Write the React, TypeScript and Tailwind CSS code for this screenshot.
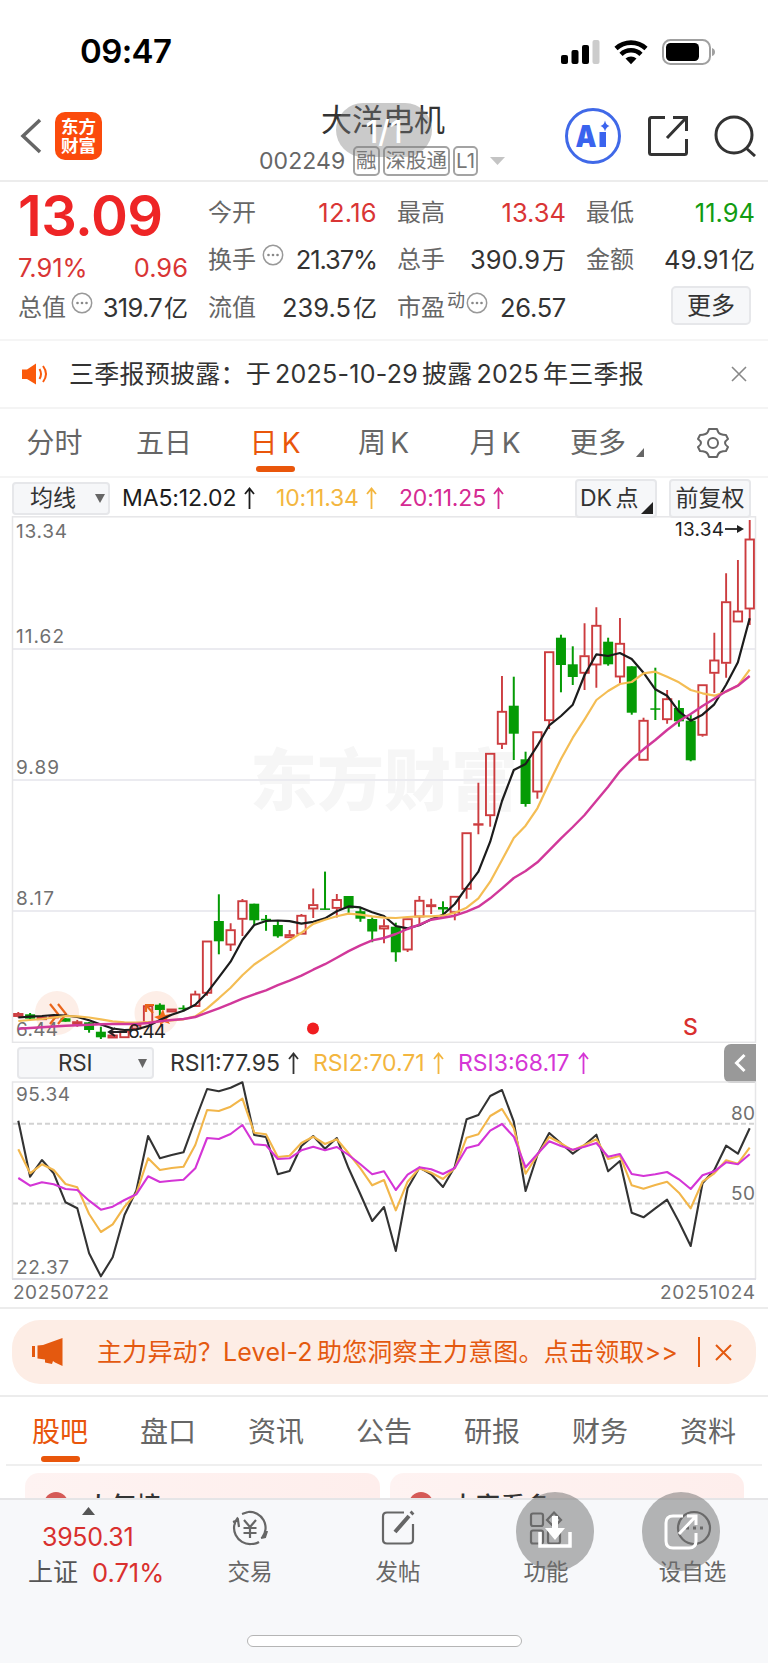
import React from "react";

type Candle = [color: "r" | "g", high: number, top: number, bottom: number, low: number];

// One entry per trading day: high, body top, body bottom, low
const candles: Candle[] = [
  ["r", 1012, 1013.5, 1016.5, 1017.5], ["g", 1013, 1014.3, 1018.7, 1019.7], ["r", 1017, 1017, 1019.7, 1019.7],
  ["r", 1015, 1015.5, 1018, 1018], ["g", 1018, 1018.3, 1021.7, 1021.7], ["r", 1020, 1021.7, 1024.3, 1026.7],
  ["g", 1022, 1022.3, 1030, 1032.7], ["g", 1026.7, 1031.7, 1037.3, 1039], ["r", 1030.7, 1035, 1038, 1038],
  ["r", 1031, 1031, 1037.7, 1037.7], ["r", 1025, 1025, 1029, 1029], ["r", 1004.5, 1005.7, 1023, 1023],
  ["g", 1003.3, 1004.7, 1010, 1016.7], ["r", 1009, 1009, 1012, 1012], ["g", 1005.3, 1007.7, 1009.3, 1011.3],
  ["r", 990.7, 994, 1006.5, 1006.5], ["r", 941, 941, 993.3, 995.7], ["g", 894.3, 921, 941.3, 954.3],
  ["r", 923.3, 929.7, 945, 951], ["r", 899, 900.7, 919.3, 936], ["g", 903.7, 903.7, 920.3, 925.3],
  ["g", 915, 918.8, 920.5, 930.8], ["g", 920.5, 925, 936.3, 937.7], ["r", 930, 934.6, 937.7, 937.7],
  ["r", 914, 915.3, 934.2, 934.2], ["r", 888.4, 904.6, 909, 918], ["g", 871.6, 908.4, 909.5, 909.5],
  ["r", 894, 899.5, 908.4, 917.4], ["g", 896, 896, 908.4, 912.9], ["g", 907.7, 911.2, 918.7, 921.8],
  ["g", 917.4, 919, 931.5, 942.2], ["r", 919.3, 925.7, 929, 943.3], ["g", 922.7, 926.7, 952.3, 961.7],
  ["r", 918.7, 918.7, 950, 952], ["r", 896, 900.3, 917, 925.7], ["r", 898.7, 904.7, 906.7, 914],
  ["g", 901.3, 907, 909.5, 914], ["r", 896.3, 896.3, 912.7, 920.3], ["r", 832.7, 832.7, 889.3, 898.7],
  ["r", 782.7, 823.7, 824.7, 834.3], ["r", 753.3, 753.3, 815.7, 826.7], ["r", 676, 711.3, 744.3, 749],
  ["g", 676.7, 705.7, 733.7, 760], ["g", 751.7, 759.3, 804, 806.7], ["r", 731.7, 731.7, 792, 798.7],
  ["r", 651.7, 651.7, 720.7, 729], ["g", 634.7, 637.7, 665, 692.3], ["g", 646.3, 664.3, 677, 685],
  ["r", 623.3, 655.7, 673.3, 690], ["r", 607.3, 625.3, 665, 687.7], ["g", 637.7, 641.7, 664.3, 665.7],
  ["r", 618, 643.3, 677, 683.3], ["g", 666.3, 666.3, 712.7, 714.7], ["r", 717.7, 720.3, 760.3, 760.3],
  ["g", 667.7, 708.3, 709.3, 720], ["r", 690, 698.7, 719.7, 723.7], ["g", 700.3, 708, 721.3, 726.7],
  ["g", 715, 720.7, 760.3, 761.3], ["r", 684.7, 684.7, 735.3, 736.7], ["r", 632.7, 660, 673.3, 693],
  ["r", 573.3, 601.7, 663.3, 677.7], ["r", 560, 611, 622, 622], ["r", 520, 539, 609, 625],
];

const ma5 = [
  1017.5, 1016.7, 1016, 1015, 1015.5, 1017, 1020.3, 1024.5, 1028.5, 1030, 1029.5, 1026, 1020, 1014.7, 1010.7, 1004.7,
  992.7, 977.3, 961.7, 940, 925, 921, 920.5, 921.2, 923.6, 921.8, 918.4, 911.2, 906.4, 907.4, 912.2, 916, 926, 928.3,
  925.3, 919.3, 914.7, 904, 887.3, 871.7, 841.7, 801, 770, 764, 745.7, 725.3, 716, 704.7, 675, 654.3, 656, 653, 659,
  672.7, 689.3, 695.7, 711.3, 720.7, 714.7, 704.3, 684.7, 662.3, 618.3,
];
const ma10 = [
  1021, 1020, 1019, 1017.5, 1016, 1016.3, 1017.5, 1019.3, 1021.3, 1022.3, 1022.7, 1022, 1021.5, 1020.5, 1019.3, 1016.3,
  1008.3, 998.3, 987.7, 975.3, 964.5, 956.6, 948.7, 940.4, 932.9, 923.9, 919.8, 916.3, 913.6, 914.6, 916.3, 917.7, 918,
  917, 916.3, 916.3, 915.7, 912.7, 907.7, 898.3, 881.7, 860, 838, 825.7, 808.3, 783, 759, 737.7, 719.3, 700, 691, 684,
  682, 673.3, 671.7, 676.7, 682.3, 690, 693.3, 695.7, 691.7, 685.7, 669.7,
];
const ma20 = [
  1028.7, 1028, 1027.3, 1026.5, 1025.7, 1025.2, 1024.7, 1024.3, 1024, 1024, 1024, 1023, 1021.3, 1020, 1019, 1017, 1012.7,
  1008.3, 1003.7, 998.7, 994.3, 990.4, 985.2, 980.7, 975.6, 969.7, 964.2, 957.7, 951.1, 945.3, 940.4, 938, 934, 929,
  924.7, 919.7, 917.7, 915.7, 911.7, 906.7, 898.3, 888.3, 878, 871, 862.3, 850.3, 838.3, 827, 815, 800.7, 786.7, 771.3,
  759.3, 749.3, 740, 730, 721, 714, 706, 698.7, 691.3, 685.7, 676,
];

// RSI series are stored at three units per pixel
const rsi1 = [
  242, 410, 360, 400, 487, 505, 640, 709, 652, 525, 452, 288, 355, 345, 337, 240, 147, 154, 143, 127, 285, 291, 403, 393,
  318, 288, 326, 294, 385, 463, 543, 501, 633, 445, 383, 403, 441, 380, 238, 225, 168, 150, 245, 453, 345, 279, 310, 341,
  315, 284, 394, 363, 518, 532, 505, 479, 545, 618, 430, 390, 317, 341, 265,
];
const rsi2 = [
  328, 400, 373, 390, 432, 442, 522, 576, 553, 500, 460, 355, 390, 384, 380, 315, 210, 213, 200, 176, 278, 283, 351, 347,
  309, 290, 312, 298, 340, 385, 436, 420, 511, 425, 385, 398, 417, 385, 293, 283, 228, 207, 265, 401, 345, 291, 310, 331,
  315, 298, 357, 347, 436, 446, 435, 425, 458, 505, 425, 400, 361, 371, 323,
];
const rsi3 = [
  414, 437, 427, 433, 447, 450, 482, 509, 500, 480, 463, 409, 426, 422, 419, 385, 294, 297, 282, 255, 313, 316, 357, 355,
  331, 320, 331, 321, 345, 373, 403, 394, 450, 404, 382, 388, 402, 384, 324, 315, 272, 252, 290, 382, 342, 304, 318, 329,
  320, 309, 350, 342, 402, 408, 403, 396, 418, 447, 406, 394, 367, 373, 343,
];

const dayX = (i: number) => 18.3 + i * 11.797;
const toPoints = (ys: number[]) => ys.map((y, i) => `${dayX(i).toFixed(1)},${y}`).join(" ");
const rsiPoints = (ys: number[]) => toPoints(ys.map((v) => +(1040 + v / 3).toFixed(1)));

const StatusBar = () => (
  <div className="flex h-[95px] shrink-0 items-center justify-between pl-[80px] pr-[52px] pt-[8px]">
    <span className="text-[33px] font-semibold leading-none tracking-[-0.6px] text-black">09:47</span>
    <svg width="156" height="28" viewBox="0 0 156 28">
      <rect x="1" y="17" width="7" height="9" rx="2" />
      <rect x="11.5" y="12" width="7" height="14" rx="2" />
      <rect x="22" y="7" width="7" height="19" rx="2" />
      <rect x="32.500" y="2" width="7" height="24" rx="2" fill="#cccccc" />
      <g fill="none" stroke="#000" strokeWidth="4.600">
        <path d="M56 10.500a22 22 0 0 1 30 0" />
        <path d="M61 16.300a14.500 14.500 0 0 1 20 0" />
      </g>
      <path d="M65.500 20.500a8.500 8.500 0 0 1 11 0L71 26.300z" />
      <rect x="103" y="2" width="47" height="24" rx="7.500" fill="none" stroke="#a0a0a0" strokeWidth="2" />
      <rect x="106" y="5" width="33" height="18" rx="4.500" />
      <path d="M152 10q3 1 3 4t-3 4z" fill="#a0a0a0" />
    </svg>
  </div>
);

const Tag = ({ children }: { children: React.ReactNode }) => (
  <span className="flex h-[30px] items-center whitespace-nowrap rounded-[5px] border-2 border-[#a3a3a3] px-[1px] text-[20.5px] leading-none text-[#777]">
    {children}
  </span>
);

const Header = () => (
  <div className="relative flex h-[87px] shrink-0 items-center justify-between border-b-2 border-[#ececec] pb-[3px] pl-[20px] pr-[12px]">
    <div className="flex items-center gap-[13px]">
      <svg width="22" height="36" viewBox="0 0 22 36" fill="none" stroke="#666" strokeWidth="3.500">
        <path d="M20 2 3 18l17 16" />
      </svg>
      <div className="flex h-[48px] w-[47px] flex-col items-center justify-center rounded-[10px] bg-[#fb4b0c] text-[17.5px] font-bold leading-[19px] text-white">
        <span>东方</span>
        <span>财富</span>
      </div>
    </div>
    <div className="flex items-center gap-[25px]">
      <svg width="57" height="56" viewBox="0 0 57 56">
        <circle cx="28" cy="28" r="26.500" fill="none" stroke="#4069e8" strokeWidth="3" />
        <text x="10.500" y="39" fontSize="30" fontWeight="900" fill="#3a63ee" textLength="21" lengthAdjust="spacingAndGlyphs">A</text>
        <path d="M34.500 24h6.500v15h-6.500z" fill="#3a63ee" />
        <path d="M40 12.500q1 4.500 4.500 5.500-3.500 1-4.500 5.500-1-4.500-4.500-5.500 3.500-1 4.500-5.500z" fill="#3a63ee" />
      </svg>
      <svg width="42" height="42" viewBox="0 0 42 42" fill="none" stroke="#333" strokeWidth="3">
        <path d="M18 2.500H4.500Q2.500 2.500 2.500 4.500v33q0 2 2 2h33q2 0 2-2V24M26 2.500h13.500V16M39 3 20 23" />
      </svg>
      <svg width="42" height="42" viewBox="0 0 42 42" fill="none" stroke="#333" strokeWidth="3">
        <circle cx="20" cy="20" r="18" />
        <path d="m32 33 9 8" />
      </svg>
    </div>
    <div className="absolute left-[259px] top-[9px] flex w-[280px] flex-col">
      <span className="pl-[62px] text-[31px] leading-[32px] text-[#333]">大洋电机</span>
      <div className="mt-[10px] flex items-center">
        <span className="w-[94px] text-[23px] leading-none tracking-[0.1px] text-[#666]">002249</span>
        <div className="flex gap-[3px]">
          <Tag>融</Tag>
          <Tag>深股通</Tag>
          <Tag>L1</Tag>
        </div>
        <svg className="ml-[12px]" width="15" height="8" viewBox="0 0 15 8">
          <path d="M0 0h15L7.500 8z" fill="#c4c4c4" />
        </svg>
      </div>
    </div>
    <div className="absolute left-[336px] top-[8px] flex h-[54px] w-[96px] items-center justify-center rounded-full bg-[#7a7a7a]/40 pt-[3px] text-[31px] font-medium leading-none text-white">
      1/1
    </div>
  </div>
);

const Dots = () => (
  <svg className="-mt-[10px]" width="22" height="22" viewBox="0 0 22 22">
    <circle cx="11" cy="11" r="9.700" fill="none" stroke="#999" strokeWidth="1.500" />
    <g fill="#888">
      <circle cx="6.500" cy="11" r="1.300" />
      <circle cx="11" cy="11" r="1.300" />
      <circle cx="15.500" cy="11" r="1.300" />
    </g>
  </svg>
);

const Label = ({ children }: { children: React.ReactNode }) => (
  <span className="text-[24px] leading-none text-[#666]">{children}</span>
);

// Number with an optional 万 / 亿 unit after it
const Amount = ({ value, unit, className = "" }: { value: string; unit?: string; className?: string }) => (
  <span className={`whitespace-nowrap text-[25.5px] leading-none ${className}`}>
    {value}
    {unit && <span className="ml-[2px] text-[24px] tracking-normal">{unit}</span>}
  </span>
);

const Quote = () => (
  <div className="grid h-[159px] shrink-0 grid-cols-4 gap-x-[20px] border-b-2 border-[#f5f5f5] pl-[19px] pr-[13px] pt-[1px] text-[24px] leading-none text-[#333]">
    <div>
      <div className="-ml-px flex h-[66px] items-center text-[56px] font-semibold tracking-[-0.5px] text-[#ee2526]">13.09</div>
      <div className="-ml-px flex h-[37px] items-center justify-between text-[#d93535]">
        <Amount value="7.91%" />
        <Amount value="0.96" />
      </div>
      <div className="-ml-px flex h-[43px] items-center justify-between">
        <span className="flex items-center gap-[5px]"><Label>总值</Label><Dots /></span>
        <Amount value="319.7" unit="亿" className="tracking-[-0.7px]" />
      </div>
    </div>
    <div>
      <div className="flex h-[60px] items-center justify-between"><Label>今开</Label><Amount value="12.16" className="tracking-[0.3px] text-[#d93535]" /></div>
      <div className="flex h-[34px] items-center justify-between">
        <span className="flex items-center gap-[6px]"><Label>换手</Label><Dots /></span>
        <Amount value="21.37%" className="tracking-[-1.1px]" />
      </div>
      <div className="flex h-[61px] items-center justify-between"><Label>流值</Label><Amount value="239.5" unit="亿" /></div>
    </div>
    <div>
      <div className="flex h-[60px] items-center justify-between"><Label>最高</Label><Amount value="13.34" className="text-[#d93535]" /></div>
      <div className="flex h-[34px] items-center justify-between"><Label>总手</Label><Amount value="390.9" unit="万" /></div>
      <div className="flex h-[61px] items-center justify-between">
        <span className="flex items-center"><Label>市盈</Label><span className="-mt-[14px] mr-[1px] pl-[2px] text-[18px] text-[#666]">动</span><Dots /></span>
        <Amount value="26.57" className="tracking-[-0.3px]" />
      </div>
    </div>
    <div>
      <div className="flex h-[60px] items-center justify-between"><Label>最低</Label><Amount value="11.94" className="text-[#129c12]" /></div>
      <div className="flex h-[34px] items-center justify-between"><Label>金额</Label><Amount value="49.91" unit="亿" /></div>
      <div className="flex h-[57px] items-center justify-end pr-[4px]">
        <span className="flex h-[39px] w-[80px] items-center justify-center rounded-[5px] border-2 border-[#e6e7ea] bg-[#f6f7f9]">更多</span>
      </div>
    </div>
  </div>
);

const Notice = () => (
  <div className="flex h-[68px] shrink-0 items-center border-b-2 border-[#f4f4f4] pl-[22px] pr-[21px]">
    <svg width="26" height="24" viewBox="0 0 26 24">
      <path d="M0 7.500h5L14 1.500v21L5 17H0z" fill="#fa5a0c" />
      <path d="M17.500 7q3 5 0 10M21 4q6 8 0 16" fill="none" stroke="#fa5a0c" strokeWidth="2" />
    </svg>
    <span className="ml-[21px] flex-1 whitespace-nowrap text-[25px] leading-none tracking-[0.25px] text-[#333] [word-spacing:-3.2px]">三季报预披露：于 2025-10-29 披露 2025 年三季报</span>
    <svg width="16" height="16" viewBox="0 0 16 16" stroke="#888" strokeWidth="1.600">
      <path d="m1 1 14 14M15 1 1 15" />
    </svg>
  </div>
);

const periodTabs = [
  { name: "分时", width: "w-[109px]" },
  { name: "五日", width: "w-[110px]" },
  { name: "日 K", width: "w-[112px]", active: true },
  { name: "周 K", width: "w-[105px]" },
  { name: "月 K", width: "w-[118px]" },
];

const PeriodTabs = () => (
  <div className="flex h-[69px] shrink-0 items-stretch border-b-2 border-[#f4f4f4] text-[28px] leading-none text-[#666]">
    {periodTabs.map((t) => (
      <div key={t.name} className={`relative flex items-center justify-center [word-spacing:-3.5px] ${t.width} ${t.active ? "text-[#e9560b]" : ""}`}>
        {t.name}
        {t.active && <span className="absolute bottom-[4px] h-[6px] w-[39px] rounded-full bg-[#e9560b]" />}
      </div>
    ))}
    <div className="flex items-center pl-[16px]">
      更多
      <svg className="ml-[10px] mt-[19px]" width="8" height="9" viewBox="0 0 8 9"><path d="M8 0v9H0z" fill="#666" /></svg>
    </div>
    <div className="flex flex-1 items-center justify-end pr-[39px]">
      <svg width="32" height="32" viewBox="0 0 32 32" fill="none" stroke="#666" strokeWidth="2" strokeLinejoin="round">
        <path d="M12 2h8q1 4 3.500 5t5.500 1l2 4q-3 2-3 4t3 4l-2 4q-3 0-5.500 1T20 30h-8q-1-4-3.500-5T3 24l-2-4q3-2 3-4t-3-4l2-4q3 0 5.500-1T12 2z" />
        <circle cx="16" cy="16" r="5" />
      </svg>
    </div>
  </div>
);

const UpArrow = () => (
  <svg width="11" height="23" viewBox="0 0 11 23" fill="none" stroke="currentColor" strokeWidth="1.800">
    <path d="M5.500 22V2M1 7l4.500-5.500L10 7" />
  </svg>
);

const Indicator = ({ text, className }: { text: string; className: string }) => (
  <span className={`flex items-center whitespace-nowrap leading-none ${className}`}>
    {text}
    <UpArrow />
  </span>
);

const MaRow = () => (
  <div className="flex h-[38px] shrink-0 items-center pl-[12px] pt-[2px] text-[23px] leading-none">
    <span className="flex h-[33px] w-[98px] items-center rounded-[4px] border-2 border-[#e6e7ea] bg-[#f6f7f9] pl-[16px] text-[#333]">
      均线
      <svg className="ml-[19px]" width="10" height="9" viewBox="0 0 10 9"><path d="M0 0h10L5 9z" fill="#666" /></svg>
    </span>
    <Indicator text="MA5:12.02" className="ml-[12px] w-[154px] gap-[8px] tracking-[-0.1px] text-[#1c1c1c]" />
    <Indicator text="10:11.34" className="w-[123px] gap-[7px] tracking-[-0.2px] text-[#f3b63f]" />
    <Indicator text="20:11.25" className="gap-[7px] tracking-[-0.2px] text-[#d52a92]" />
    <span className="ml-auto flex h-[39px] w-[82px] items-center whitespace-nowrap rounded-[4px] border-2 border-[#e6e7ea] bg-[#f6f7f9] pl-[3px] text-[#333] [word-spacing:-3px]">
      DK 点
      <svg className="ml-[2px] mt-[20px] shrink-0" width="12" height="12" viewBox="0 0 12 12"><path d="M12 0v12H0z" fill="#222" /></svg>
    </span>
    <span className="ml-[12px] mr-[17px] flex h-[39px] w-[82px] items-center justify-center rounded-[4px] border-2 border-[#e6e7ea] bg-[#f6f7f9] text-[#333]">前复权</span>
  </div>
);

const CandleChart = () => (
  <svg className="shrink-0" width="768" height="527" viewBox="0 516 768 527" fill="none">
    <text x="250" y="805" fontSize="67" fontWeight="900" fill="#f6f6f6" textLength="268">东方财富</text>
    <g stroke="#ebebf0" strokeWidth="2">
      <path d="M13 649H755M13 780H755M13 911H755" />
      <rect x="12.500" y="516.800" width="743" height="525.500" stroke="#e6e6e8" strokeWidth="1.500" />
    </g>
    <circle cx="57" cy="1013" r="22" fill="#fdeee7" />
    <circle cx="156.500" cy="1013" r="22" fill="#fdeee7" />
    <g fontSize="19" fill="#707070">
      <text x="16" y="538" textLength="51">13.34</text>
      <text x="16" y="642.500" textLength="48">11.62</text>
      <text x="16" y="773.500" textLength="43">9.89</text>
      <text x="16" y="905" textLength="38">8.17</text>
      <text x="16" y="1036" textLength="42">6.44</text>
    </g>
    {candles.map(([color, high, top, bottom, low], i) => {
      const x = dayX(i);
      return color === "g" ? (
        <g key={i} fill="#059b05">
          <rect x={x - 1} y={high} width="2" height={low - high} />
          <rect x={x - 5} y={top} width="10" height={Math.max(bottom - top, 1.5)} />
        </g>
      ) : (
        <g key={i} stroke="#cc3c3f" strokeWidth="1.900">
          <path d={`M${x} ${high}V${top}M${x} ${bottom}V${low}`} />
          <rect x={x - 4.2} y={top + 0.5} width="8.400" height={Math.max(bottom - top - 1, 0.5)} />
        </g>
      );
    })}
    <g stroke="#e9651b" strokeWidth="2.200">
      <path d="m50 1004 8 10-8 10M58 1004l8 10-8 10" />
      <path d="M146 1012v-7h8M146 1005l7 8" />
    </g>
    <path d="m163 1009 2 6 6-1-4 5 3 5-6-2-4 4v-6l-6-3 6-2z" fill="#f26a1b" />
    <g strokeWidth="2.200" strokeLinejoin="round">
      <polyline points={toPoints(ma5)} stroke="#1c1c1c" />
      <polyline points={toPoints(ma10)} stroke="#f4bd54" />
      <polyline points={toPoints(ma20)} stroke="#d1389a" strokeWidth="2.400" />
    </g>
    <text x="128" y="1038" fontSize="19" fill="#222" textLength="38">6.44</text>
    <path d="M109 1032h18M115 1028l-6 4 6 4" stroke="#222" strokeWidth="2" />
    <text x="675" y="536" fontSize="19" fill="#222" textLength="49">13.34</text>
    <path d="M725 529h17" stroke="#222" strokeWidth="1.800" />
    <path d="m737 525 7 4-7 4z" fill="#222" />
    <circle cx="313" cy="1028.500" r="6" fill="#f01d20" />
    <text x="683" y="1034.500" fontSize="23" fontWeight="500" fill="#d9302e">S</text>
  </svg>
);

const RsiRow = () => (
  <div className="flex h-[38px] shrink-0 items-center pl-[17px] pt-[2px] text-[23px] leading-none">
    <span className="flex h-[32px] w-[137px] items-center rounded-[4px] border-2 border-[#e6e7ea] bg-[#f6f7f9] pl-[39px] text-[22.5px] tracking-[-0.2px] text-[#333]">
      RSI
      <svg className="ml-[46px]" width="9" height="9" viewBox="0 0 9 9"><path d="M0 0h9L4.500 9z" fill="#666" /></svg>
    </span>
    <Indicator text="RSI1:77.95" className="ml-[16px] w-[143px] gap-[8px] text-[#333]" />
    <Indicator text="RSI2:70.71" className="w-[145px] gap-[8px] text-[#f3b63f]" />
    <Indicator text="RSI3:68.17" className="gap-[8px] text-[#d536d5]" />
    <span className="ml-auto mr-[12px] flex h-[39px] w-[32px] items-center justify-center rounded-l-[7px] bg-[#999]">
      <svg width="12" height="20" viewBox="0 0 12 20" fill="none" stroke="#fff" strokeWidth="3"><path d="m10.500 2-8 8 8 8" /></svg>
    </span>
  </div>
);

const RsiChart = () => (
  <svg className="shrink-0" width="768" height="226" viewBox="0 1081 768 226" fill="none">
    <path d="M12.500 1279V1082H755.500V1279" stroke="#e6e6e8" strokeWidth="1.500" />
    <path d="M12 1279H756" stroke="#dfdfe6" strokeWidth="2" />
    <path d="M13 1123.700H755M13 1203.500H755" stroke="#d2d2d2" strokeWidth="2" strokeDasharray="5 3" />
    <g fontSize="19" fill="#707070">
      <text x="16" y="1101" textLength="54">95.34</text>
      <text x="16" y="1273.500" textLength="53">22.37</text>
      <text x="731" y="1119.500" textLength="24">80</text>
      <text x="731" y="1199.500" textLength="24">50</text>
      <text x="13" y="1298.500" textLength="96">20250722</text>
      <text x="660" y="1298.500" textLength="95">20251024</text>
    </g>
    <g strokeWidth="2.100" strokeLinejoin="round">
      <polyline points={rsiPoints(rsi1)} stroke="#333" />
      <polyline points={rsiPoints(rsi2)} stroke="#f2b64a" />
      <polyline points={rsiPoints(rsi3)} stroke="#d435d6" />
    </g>
  </svg>
);

const Banner = () => (
  <div className="shrink-0 border-y-2 border-[#ececec] px-[12px] py-[11px]">
    <div className="flex h-[64px] items-center rounded-[28px] bg-[#fdede5] pl-[20px] pr-[24px] text-[#e4590f]">
      <svg width="31" height="28" viewBox="0 0 31 28" fill="currentColor">
        <path d="M0 8h3v11H0zM5.500 7.500 11 7 30.500 0v28L23 24.500l-2-1.500-1 3-7-1.500v-3l-7.500-1z" />
      </svg>
      <span className="ml-[34px] flex-1 whitespace-nowrap text-[25px] leading-none tracking-[0.2px] [word-spacing:-3px]">主力异动？Level-2 助您洞察主力意图。点击领取&gt;&gt;</span>
      <span className="h-[30px] w-[2px] bg-current" />
      <svg className="ml-[15px]" width="17" height="17" viewBox="0 0 17 17" stroke="currentColor" strokeWidth="2"><path d="m1 1 15 15M16 1 1 16" /></svg>
    </div>
  </div>
);

const infoTabs = ["股吧", "盘口", "资讯", "公告", "研报", "财务", "资料"];

const InfoTabs = () => (
  <div className="mx-[6px] flex h-[69px] shrink-0 justify-between border-b-2 border-[#efefef] px-[26px] text-[28px] leading-none text-[#666]">
    {infoTabs.map((name, i) => (
      <div key={name} className={`relative flex h-[69px] items-center justify-center ${i === 0 ? "text-[#e9560b]" : ""}`}>
        {name}
        {i === 0 && <span className="absolute bottom-[4px] h-[6px] w-[39px] rounded-full bg-[#e9560b]" />}
      </div>
    ))}
  </div>
);

const Cards = () => (
  <div className="flex h-[32px] shrink-0 gap-[10px] overflow-hidden pl-[25px] pr-[24px] pt-[7px]">
    {["人气榜", "大家看多"].map((title) => (
      <div key={title} className="flex h-[80px] flex-1 items-start rounded-[14px] bg-gradient-to-r from-[#fef3f2] to-[#feeeec] pl-[19px] pt-[19px]">
        <span className="h-[24px] w-[24px] rounded-full bg-[#d55a57]" />
        <span className="ml-[18px] mt-[2px] text-[25px] font-medium leading-none text-[#333]">{title}</span>
      </div>
    ))}
  </div>
);

const NavItem = ({ label, className, children }: { label: string; className: string; children: React.ReactNode }) => (
  <div className={`flex shrink-0 flex-col items-center pt-[10px] text-[22.5px] leading-none text-[#666] ${className}`}>
    <svg width="40" height="36" viewBox="0 0 40 36" fill="none" stroke="#666" strokeWidth="2.200">{children}</svg>
    <span className="mt-[15px]">{label}</span>
  </div>
);

const BottomNav = () => (
  <div className="relative h-[165px] shrink-0 border-t-2 border-[#e5e5e7] bg-[#f7f8fa]">
    <div className="flex">
      <div className="flex w-[191px] shrink-0 flex-col pt-[7px] leading-none text-[#d9302e]">
        <svg className="ml-[82px]" width="13" height="8" viewBox="0 0 13 8"><path d="M6.500 0 13 8H0z" fill="#555" /></svg>
        <span className="ml-[42px] mt-[10px] text-[25px] leading-none tracking-[-0.3px]">3950.31</span>
        <span className="mt-[10px] flex items-center pl-[28px]">
          <span className="text-[25px] leading-none text-[#555]">上证</span>
          <span className="ml-[14px] text-[25.5px] leading-none">0.71%</span>
        </span>
      </div>
      <NavItem label="交易" className="w-[118px]">
        <path d="M8 7.500A16 16 0 0 0 21 34q5 0 8-2M32 28A16 16 0 0 0 18 2M12 4l6-2M3 12l5-2 1 7M31 28l4-1 2-6" />
        <path d="m14 10 6 7 6-7M20 17v11M13.500 18h13M13.500 23h13" />
      </NavItem>
      <NavItem label="发帖" className="w-[178px]">
        <path d="M26 2.500H9q-4 0-4 4v23q0 4 4 4h22q4 0 4-4V14" />
        <path d="M17 22 31 6M33 4l2-2" strokeWidth="4" />
      </NavItem>
      <NavItem label="功能" className="w-[118px]">
        <rect x="5" y="3.500" width="12" height="12.500" rx="2" />
        <path d="m28 2.500 7 7.500-7 7-7-7z" />
        <rect x="5" y="20.500" width="12" height="13" rx="2" />
        <rect x="22" y="20.500" width="12" height="13" rx="2" />
      </NavItem>
      <NavItem label="设自选" className="w-[163px] pl-[12px]">
        <circle cx="21" cy="18" r="16" />
        <path d="M13 18h3M20 18h3M27 18h3" strokeWidth="3" />
      </NavItem>
    </div>
    <div className="absolute left-[516px] top-[-8px] flex h-[79px] w-[78px] items-center justify-center rounded-full bg-[#6e6e6e]/50">
      <svg width="34" height="32" viewBox="0 0 34 32" fill="none" stroke="#fff" strokeWidth="3.500">
        <path d="M2 16v14h30V16" />
        <path d="M14 0h6v12h7L17 24 7 12h7z" fill="#fff" stroke="none" />
      </svg>
    </div>
    <div className="absolute left-[642px] top-[-8px] flex h-[79px] w-[78px] items-center justify-center rounded-full bg-[#6e6e6e]/50">
      <svg width="34" height="36" viewBox="0 0 34 36" fill="none" stroke="#fff" strokeWidth="3">
        <path d="M19 2H9Q2 2 2 9v18q0 7 7 7h16q7 0 7-7v-8M23 2h9v9M32 2 15 20" />
      </svg>
    </div>
    <div className="absolute bottom-[16px] left-[247px] h-[12px] w-[275px] rounded-full border border-[#b5b5b5] bg-white" />
  </div>
);

const App: React.FC = () => {
  return (
    <div className="flex h-[1663px] w-[768px] flex-col overflow-hidden bg-white [font-family:Inter,'Noto_Sans_CJK_SC',sans-serif]">
      <StatusBar />
      <Header />
      <Quote />
      <Notice />
      <PeriodTabs />
      <MaRow />
      <CandleChart />
      <RsiRow />
      <RsiChart />
      <Banner />
      <InfoTabs />
      <Cards />
      <BottomNav />
    </div>
  );
};

export default App;
